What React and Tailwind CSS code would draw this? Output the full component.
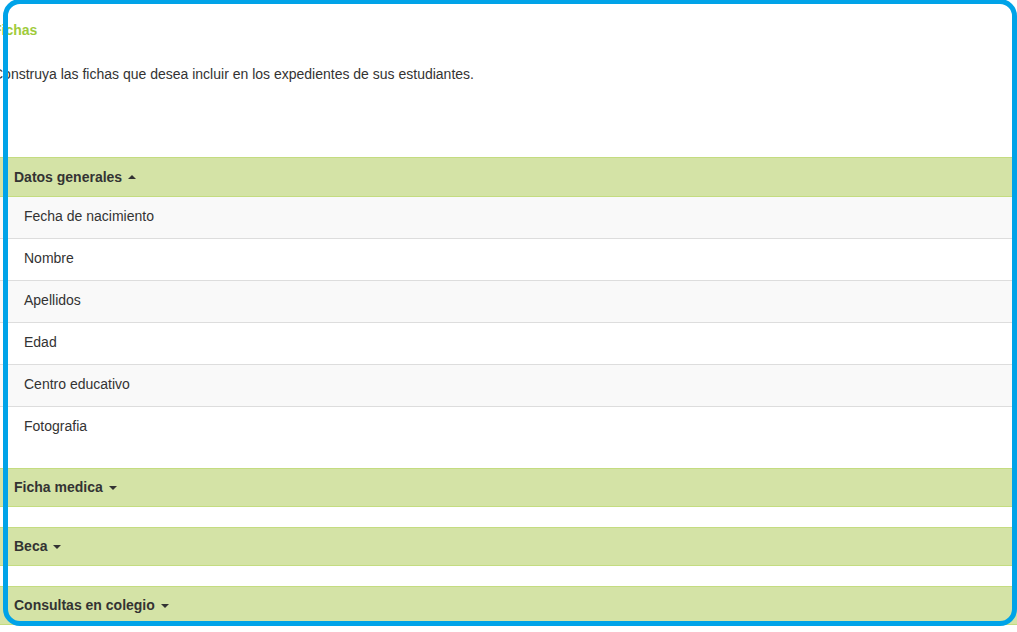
import React, { useState } from "react";

const sections = [
  {
    title: "Datos generales",
    open: true,
    items: ["Fecha de nacimiento", "Nombre", "Apellidos", "Edad", "Centro educativo", "Fotografia"],
  },
  { title: "Ficha medica", open: false, items: [] },
  { title: "Beca", open: false, items: [] },
  { title: "Consultas en colegio", open: false, items: [] },
];

function Caret({ up }) {
  return up ? (
    <span className="ml-[6px] inline-block w-0 h-0 align-middle border-x-[4px] border-x-transparent border-b-[4px] border-b-[#333]" />
  ) : (
    <span className="ml-[6px] inline-block w-0 h-0 align-middle border-x-[4px] border-x-transparent border-t-[4px] border-t-[#333]" />
  );
}

function Panel({ section }) {
  const [open, setOpen] = useState(section.open);
  return (
    <div className="mb-[20px]">
      <div
        onClick={() => setOpen(!open)}
        className={`${open ? "h-[40px]" : "h-[39px]"} flex items-center px-[14px] bg-[#d4e3a6] border-y border-[#c4dc80] font-bold text-[14px] text-[#333] cursor-pointer`}
      >
        {section.title}
        <Caret up={open} />
      </div>
      {open && (
        <ul>
          {section.items.map((item, i) => {
            const last = i === section.items.length - 1;
            return (
              <li
                key={item}
                className={`flex items-center pb-[2px] px-[24px] text-[14px] text-[#333] ${
                  i % 2 === 0 ? "bg-[#f9f9f9]" : "bg-white"
                } ${last ? "h-[41px]" : "h-[42px] border-b border-[#dddddd]"}`}
              >
                {item}
              </li>
            );
          })}
        </ul>
      )}
    </div>
  );
}

export default function App() {
  return (
    <div
      className="relative w-[1017px] h-[632px] overflow-hidden bg-white"
      style={{ fontFamily: '"Liberation Sans", Arial, sans-serif' }}
    >
      <div className="pt-[20px] ml-[-7px]">
        <h3 className="text-[14px] leading-[20px] font-bold text-[#9fcb3c]">Fichas</h3>
        <p className="mt-[24px] text-[14px] leading-[20px] text-[#333]">
          Construya las fichas que desea incluir en los expedientes de sus estudiantes.
        </p>
      </div>

      <div className="mt-[73px]">
        {sections.map((s) => (
          <Panel key={s.title} section={s} />
        ))}
      </div>

      {/* marco azul */}
      <div className="pointer-events-none absolute left-[3px] top-[-1px] w-[1014px] h-[627px] border-[5px] border-[#00a3e8] rounded-[17px]" />
    </div>
  );
}
